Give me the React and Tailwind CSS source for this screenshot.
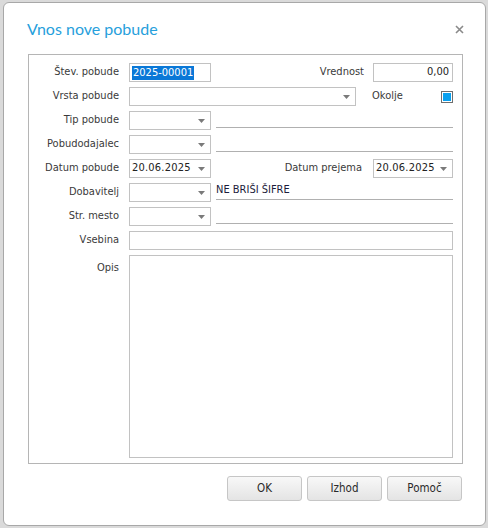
import React from "react";

const Arrow = () => (
  <svg width="7" height="4" viewBox="0 0 7 4" className="absolute right-[5px] top-1/2 -translate-y-1/2">
    <path d="M0 0h7L3.5 4z" fill="#7a7a7a" />
  </svg>
);

const Label = ({ children, className = "" }) => (
  <div className={`w-[90px] shrink-0 text-right text-[#3a3a3a] ${className}`}>{children}</div>
);

const Box = ({ className = "", children }) => (
  <div className={`relative h-[19px] border border-[#c2c2c2] bg-white flex items-center px-[2px] text-[#222] ${className}`}>
    {children}
  </div>
);

const Select = ({ className = "w-[82px]", value }) => (
  <Box className={className}>
    {value && <span className="tracking-[0.2px]">{value}</span>}
    <Arrow />
  </Box>
);

const LineField = ({ text }) => (
  <div className="flex-1 ml-[5px] h-[17px] self-start border-b border-[#b0b0b0] flex items-end pb-[1px] text-[#1c1c3a]">
    {text}
  </div>
);

const Btn = ({ children }) => (
  <button className="w-[75px] h-[25px] rounded-[3px] border border-[#c6c6c6] bg-gradient-to-b from-[#f8f8f8] to-[#e4e4e4] text-[#2a2a2a] text-[11.5px]">
    {children}
  </button>
);

export default function App() {
  return (
    <div className="w-[488px] h-[528px] bg-[#dadada] pt-[2px] pl-[3px] overflow-hidden" style={{ fontFamily: "'DejaVu Sans Condensed', 'Liberation Sans', Arial, sans-serif" }}>
      <div className="w-[483px] h-[524px] bg-white border border-[#a8a8a8] rounded-[6px] flex flex-col">
        {/* header */}
        <div className="h-[51px] flex items-center justify-between pl-[23px] pr-[21px]">
          <span className="text-[#27a0dc] text-[16px]" style={{ fontFamily: "Lato, 'Open Sans', sans-serif" }}>
            Vnos nove pobude
          </span>
          <svg width="9" height="9" viewBox="0 0 9 9" className="mt-[1px]">
            <path d="M1 1l7 7M8 1L1 8" stroke="#8a8a8a" strokeWidth="1.6" />
          </svg>
        </div>

        {/* form */}
        <div className="ml-[24px] w-[435px] h-[410px] border border-[#b5b5b5] pt-[8px] pr-[9px] pb-[5px] flex flex-col gap-[5px] text-[11px]">
          <div className="flex items-center h-[19px]">
            <Label>Štev. pobude</Label>
            <Box className="w-[82px] ml-[10px]">
              <span className="bg-[#0a78d7] text-white px-[1px] leading-[14px]">2025-00001</span>
            </Box>
            <div className="flex-1" />
            <span className="text-[#3a3a3a]">Vrednost</span>
            <Box className="w-[80px] shrink-0 ml-[9px] justify-end pr-[3px]">0,00</Box>
          </div>

          <div className="flex items-center h-[19px]">
            <Label>Vrsta pobude</Label>
            <Select className="w-[227px] ml-[10px]" />
            <span className="ml-[16px] text-[#3a3a3a]">Okolje</span>
            <div className="flex-1" />
            <div className="w-[12px] h-[12px] border border-[#6e6e6e] p-[1px] bg-white">
              <div className="w-full h-full bg-[#0aa0ee]" />
            </div>
          </div>

          <div className="flex items-center h-[19px]">
            <Label>Tip pobude</Label>
            <div className="ml-[10px]"><Select /></div>
            <LineField />
          </div>

          <div className="flex items-center h-[19px]">
            <Label>Pobudodajalec</Label>
            <div className="ml-[10px]"><Select /></div>
            <LineField />
          </div>

          <div className="flex items-center h-[19px]">
            <Label>Datum pobude</Label>
            <div className="ml-[10px]"><Select value="20.06.2025" /></div>
            <div className="flex-1" />
            <span className="text-[#3a3a3a]">Datum prejema</span>
            <div className="ml-[11px] shrink-0"><Select className="w-[80px]" value="20.06.2025" /></div>
          </div>

          <div className="flex items-center h-[19px]">
            <Label>Dobavitelj</Label>
            <div className="ml-[10px]"><Select /></div>
            <LineField text="NE BRIŠI ŠIFRE" />
          </div>

          <div className="flex items-center h-[19px]">
            <Label>Str. mesto</Label>
            <div className="ml-[10px]"><Select /></div>
            <LineField />
          </div>

          <div className="flex items-center h-[19px]">
            <Label>Vsebina</Label>
            <Box className="flex-1 ml-[10px]" />
          </div>

          <div className="flex flex-1">
            <Label className="pt-[5px]">Opis</Label>
            <div className="flex-1 ml-[10px] border border-[#c2c2c2] bg-white" />
          </div>
        </div>

        {/* actions */}
        <div className="mt-[12px] ml-[223px] flex gap-[5px]">
          <Btn>OK</Btn>
          <Btn>Izhod</Btn>
          <Btn>Pomoč</Btn>
        </div>
      </div>
    </div>
  );
}
